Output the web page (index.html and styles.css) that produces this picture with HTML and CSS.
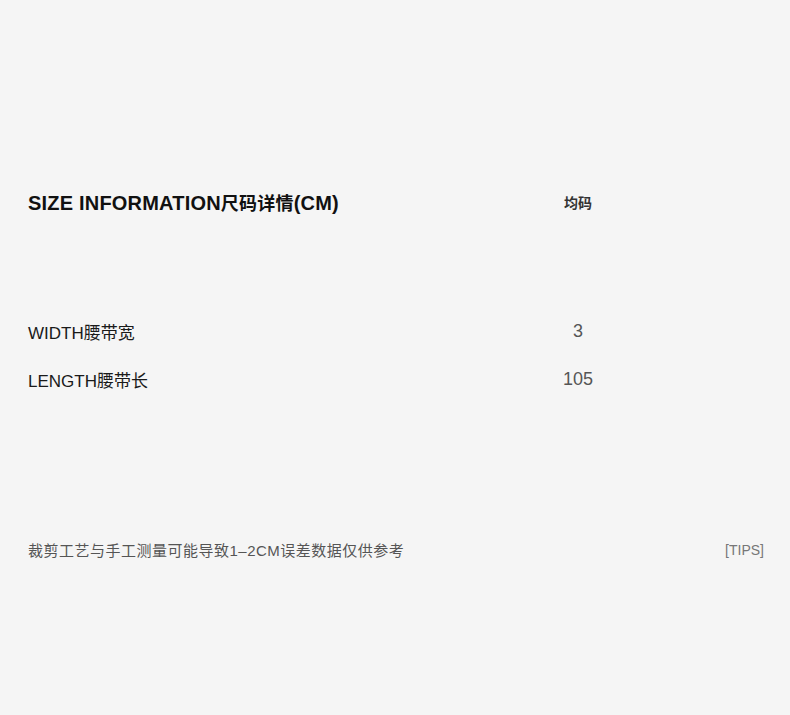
FILE: index.html
```html
<!DOCTYPE html>
<html lang="zh-CN">
<head>
  <meta charset="UTF-8" />
  <title>Size information</title>
  <link rel="stylesheet" href="styles.css">
</head>
<body>
  <div class="page">
    <div class="size-table">
      <div class="row head">
        <div class="label title">SIZE INFORMATION<span class="cn">尺码详情</span>(CM)</div>
        <div class="value size">均码</div>
      </div>
      <div class="row item first">
        <div class="label">WIDTH<span class="cn">腰带宽</span></div>
        <div class="value">3</div>
      </div>
      <div class="row item">
        <div class="label">LENGTH<span class="cn">腰带长</span></div>
        <div class="value">105</div>
      </div>
    </div>

    <div class="tips">
      <span class="note">裁剪工艺与手工测量可能导致1–2CM误差数据仅供参考</span>
      <span class="tag">[TIPS]</span>
    </div>
  </div>
</body>
</html>
```

FILE: styles.css
```css
html, body {
  margin: 0;
  background-color: #f5f5f5;
}
body {
  font-family: 'Liberation Sans', 'Noto Sans CJK SC', sans-serif;
  color: #222;
}
.page {
  width: 790px;
  height: 715px;
  padding: 0 26px 0 28px;
  box-sizing: border-box;
}
.size-table {
  padding-top: 188px;
}
.row {
  display: grid;
  grid-template-columns: 500px 100px;
  align-items: center;
}
.value {
  text-align: center;
}
.head {
  height: 28px;
}
.title {
  font-size: 20px;
  font-weight: bold;
  color: #111;
  letter-spacing: 0.2px;
}
.title .cn {
  font-size: 18px;
}
.size {
  font-size: 14px;
  font-weight: bold;
  color: #333;
}
.item {
  height: 48px;
  font-size: 17px;
}
.item.first {
  margin-top: 91px;
}
.item .label {
  color: #1a1a1a;
}
.item .value {
  color: #555;
  font-size: 18px;
}
.tips {
  margin-top: 136px;
  display: flex;
  justify-content: space-between;
  align-items: center;
  font-size: 15px;
  color: #555;
}
.note {
  letter-spacing: 0.5px;
}
.tag {
  font-size: 14px;
  color: #777;
}
```
